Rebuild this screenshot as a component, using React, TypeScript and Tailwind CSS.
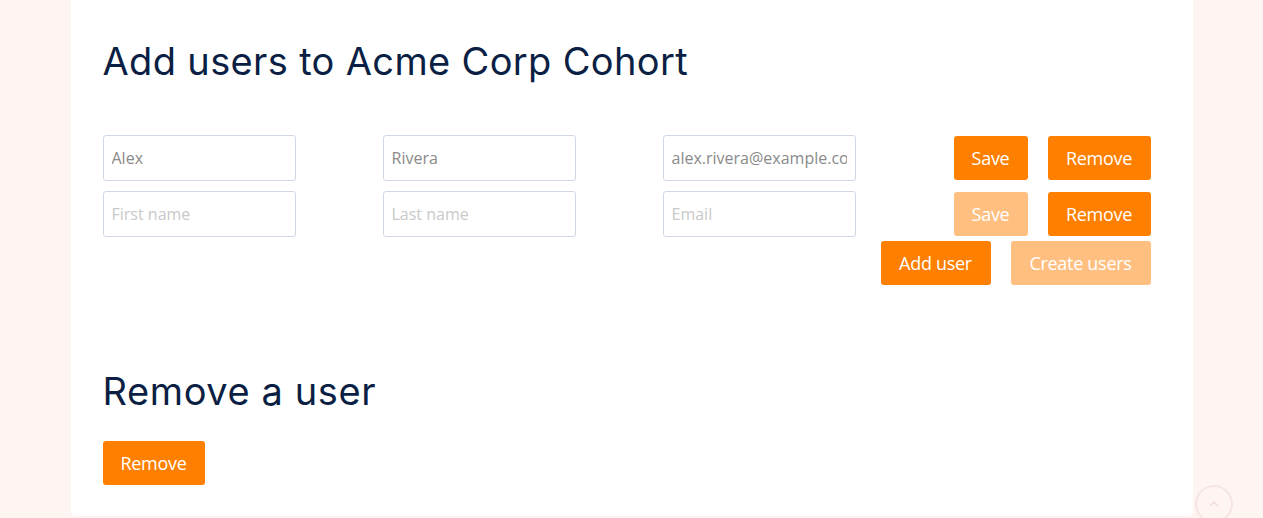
import React from "react"

const btn = "h-[44px] whitespace-nowrap rounded-[3px] px-[18px] text-[18px] tracking-[-0.3px] text-white bg-[#ff8000]"
const btnOff = "h-[44px] whitespace-nowrap rounded-[3px] px-[18px] text-[18px] tracking-[-0.3px] text-white bg-[#ffbf80] cursor-not-allowed"
const input =
    "h-[46px] w-[193px] rounded-[3px] border border-[#cfd8e3] bg-white px-2 text-[16px] text-[#8a8a8a] placeholder:text-[#c9c9c9] outline-none"

const UserRow = ({ first, last, email, saved }: { first: string; last: string; email: string; saved: boolean }) => (
    <div className="flex items-center">
        <div className="flex gap-[87px]">
            <input className={input} defaultValue={first} placeholder="First name" />
            <input className={input} defaultValue={last} placeholder="Last name" />
            <input className={input} defaultValue={email} placeholder="Email" />
        </div>
        <div className="ml-auto flex gap-[20px]">
            <button className={saved ? btn + " w-[74px] px-0" : btnOff + " w-[74px] px-0"}>Save</button>
            <button className={btn + " w-[103px] px-0"}>Remove</button>
        </div>
    </div>
)

export default function App() {
    return (
        <div
            className="min-h-[518px] bg-[#fef4f2]"
            style={{ fontFamily: "'Open Sans', 'Liberation Sans', sans-serif" }}
        >
            <div className="relative mx-auto w-[1122px] min-h-[516px] rounded-b-[4px] bg-white pl-[32px] pr-[42px] pb-[31px] pt-[38px]">
                <h1 className="font-['Inter',sans-serif] text-[38px] leading-[46px] tracking-[0.35px] text-[#0b1f44]">
                    Add users to Acme Corp Cohort
                </h1>

                <div className="mt-[51px] flex flex-col gap-[10px]">
                    <UserRow first="Alex" last="Rivera" email="alex.rivera@example.com" saved />
                    <UserRow first="" last="" email="" saved={false} />
                    <div className="-mt-[6px] flex justify-end gap-[20px]">
                        <button className={btn + " w-[110px] h-[43px] px-0"}>Add user</button>
                        <button className={btnOff + " w-[140px] h-[43px] px-0"}>Create users</button>
                    </div>
                </div>

                <h2 className="mt-[83px] font-['Inter',sans-serif] text-[38px] leading-[46px] tracking-[0.6px] text-[#0b1f44]">
                    Remove a user
                </h2>
                <button className={btn + " mt-[27px] w-[102px] h-[43px] px-0"}>Remove</button>
            </div>

            <button className="absolute left-[1195px] top-[485px] h-[38px] w-[38px] rounded-full border-2 border-[#f5e6e3] text-[#f0dcd8]">
                <svg viewBox="0 0 24 24" className="mx-auto h-4 w-4" fill="none" stroke="currentColor" strokeWidth="2">
                    <path d="M6 15l6-6 6 6" />
                </svg>
            </button>
        </div>
    )
}
